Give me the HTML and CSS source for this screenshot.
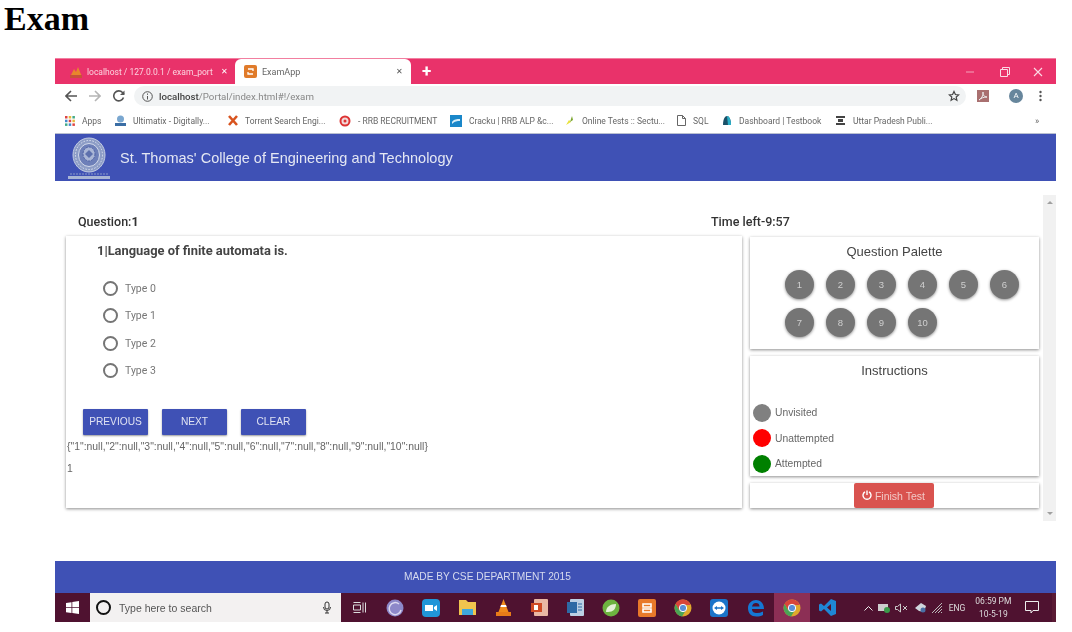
FILE: index.html
```html
<!DOCTYPE html>
<html lang="en">
<head>
    <meta charset="UTF-8">
    <meta name="viewport" content="width=device-width, initial-scale=1.0">
    <title>Exam</title>
    <link rel="stylesheet" href="styles.css">
</head>
<body>
    <h1 class="doc-title">Exam</h1>

    <div class="shot">
        <!-- browser tabs -->
        <div class="tabbar">
            <div class="tab">
                <svg width="14" height="14" viewBox="0 0 14 14"><path d="M1 12 L5 4 L7 7 L9 2 L13 12Z" fill="#e8862c"/><path d="M1 10h12v3H1z" fill="#c9503a"/></svg>
                <span class="tab-name">localhost / 127.0.0.1 / exam_port</span>
                <span class="tab-x">✕</span>
            </div>
            <div class="tab tab-active">
                <svg width="13" height="13" viewBox="0 0 13 13"><rect width="13" height="13" rx="2" fill="#e07b2a"/><path d="M4 4h5v2M9 9H4V7" fill="none" stroke="#fff" stroke-width="1.3"/></svg>
                <span class="tab-name">ExamApp</span>
                <span class="tab-x">✕</span>
            </div>
            <span class="tab-plus">+</span>
            <div class="win-btns">
                <svg width="10" height="10" viewBox="0 0 10 10"><path d="M1 5h8" stroke="#f3a3bb" stroke-width="1"/></svg>
                <svg width="10" height="10" viewBox="0 0 10 10"><path d="M.5 2.5h7v7h-7zM2.5 2.5v-2h7v7h-2" fill="none" stroke="#fbdbe5"/></svg>
                <svg class="win-close" width="10" height="10" viewBox="0 0 10 10"><path d="M1 1l8 8M9 1l-8 8" stroke="#fbdbe5" stroke-width="1.1"/></svg>
            </div>
        </div>

        <!-- address bar -->
        <div class="toolbar">
            <svg class="nav" width="12" height="12" viewBox="0 0 12 12"><path d="M12 6H1.5M6 1L1 6l5 5" fill="none" stroke="#555" stroke-width="1.6"/></svg>
            <svg class="nav" width="12" height="12" viewBox="0 0 12 12"><path d="M0 6h10.5M6 1l5 5-5 5" fill="none" stroke="#b5b5b5" stroke-width="1.6"/></svg>
            <svg class="nav" width="12" height="12" viewBox="0 0 12 12"><path d="M10.5 7.5A5 5 0 1 1 9.5 2.5L11 4" fill="none" stroke="#555" stroke-width="1.6"/><path d="M11.5 .5v4.500h-4.500z" fill="#555"/></svg>
            <div class="omnibox">
                <svg width="11" height="11" viewBox="0 0 11 11"><circle cx="5.500" cy="5.500" r="4.800" fill="none" stroke="#555"/><path d="M5.500 5v3.500M5.500 2.500v1.300" stroke="#555"/></svg>
                <span class="url"><b>localhost</b>/Portal/index.html#!/exam</span>
                <svg class="star" width="12" height="12" viewBox="0 0 24 24"><path d="M12 3l2.800 6 6.500.7-4.900 4.400 1.400 6.400L12 17.200l-5.800 3.300 1.400-6.400-4.900-4.400 6.500-.7z" fill="none" stroke="#444" stroke-width="2.400"/></svg>
            </div>
            <svg class="pdf" width="12" height="12" viewBox="0 0 12 12"><rect width="12" height="12" fill="#a97070"/><path d="M2 10c3-2 5-6 4-8-1 2 1 5 4 5-3 0-6 1-8 3z" fill="none" stroke="#eee"/></svg>
            <span class="avatar">A</span>
            <svg width="3" height="12" viewBox="0 0 3 12"><circle cx="1.500" cy="2" r="1.200" fill="#555"/><circle cx="1.500" cy="6" r="1.200" fill="#555"/><circle cx="1.500" cy="10" r="1.200" fill="#555"/></svg>
        </div>

        <!-- bookmarks -->
        <div class="bookmarks">
            <a class="bm bm-apps"><svg width="10" height="10" viewBox="0 0 10 10"><path d="M0 0h2.500v2.500H0z" fill="#d44"/><path d="M3.700 0h2.500v2.500H3.700z" fill="#e8b93a"/><path d="M7.400 0h2.500v2.500H7.400z" fill="#4a8"/><path d="M0 3.700h2.500v2.500H0z" fill="#48c"/><path d="M3.700 3.700h2.500v2.500H3.700z" fill="#d44"/><path d="M7.400 3.700h2.500v2.500H7.400z" fill="#e8b93a"/><path d="M0 7.400h2.500v2.500H0z" fill="#4a8"/><path d="M3.700 7.400h2.500v2.500H3.700z" fill="#48c"/><path d="M7.400 7.400h2.500v2.500H7.400z" fill="#d44"/></svg>Apps</a>
            <a class="bm bm-ulti"><svg width="11" height="11" viewBox="0 0 11 11"><circle cx="5.500" cy="4" r="3.500" fill="#7aa7d0"/><path d="M0 8h11v3H0z" fill="#3b6ea5"/></svg>Ultimatix - Digitally...</a>
            <a class="bm bm-torrent"><svg width="10" height="11" viewBox="0 0 10 11"><path d="M1 1l8 9M9 1l-8 9" stroke="#d8541f" stroke-width="2.600"/></svg>Torrent Search Engi...</a>
            <a class="bm bm-rrb"><svg width="12" height="12" viewBox="0 0 12 12"><circle cx="6" cy="6" r="4.500" fill="#f2d9d9" stroke="#d33" stroke-width="2"/><circle cx="6" cy="6" r="1.500" fill="#d33"/></svg>- RRB RECRUITMENT</a>
            <a class="bm bm-cracku"><svg width="12" height="12" viewBox="0 0 12 12"><rect width="12" height="12" fill="#1a87c9"/><path d="M2 7c2-3 5-3 8-3v2C7 6 5 6 2 9z" fill="#d7eef9"/></svg>Cracku | RRB ALP &amp;c...</a>
            <a class="bm bm-online"><svg width="10" height="11" viewBox="0 0 10 11"><path d="M1 10l3-5 2 2z" fill="#e8e23a"/><path d="M7 1l1 4-3 2z" fill="#7aa52c"/></svg>Online Tests :: Sectu...</a>
            <a class="bm bm-sql"><svg width="9" height="11" viewBox="0 0 9 11"><path d="M.5.500h5l3 3v7h-8zM5.500.500v3h3" fill="#fff" stroke="#666"/></svg>SQL</a>
            <a class="bm bm-dash"><svg width="10" height="11" viewBox="0 0 10 11"><path d="M1 10C1 4 3 1 5 1s4 3 4 9z" fill="#1a5068"/><path d="M5 1c2 0 4 3 4 9H6z" fill="#2bb0c8"/></svg>Dashboard | Testbook</a>
            <a class="bm bm-up"><svg width="11" height="11" viewBox="0 0 11 11"><path d="M1 1h9v2H1zM3 4h5v3H3zM1 8h9v2H1z" fill="#444"/></svg>Uttar Pradesh Publi...</a>
            <span class="bm-more">»</span>
        </div>

        <!-- page -->
        <header class="app-head">
            <svg class="crest" width="42" height="44" viewBox="0 0 42 44">
                <ellipse cx="21" cy="18" rx="16" ry="17" fill="#8d9dc6" stroke="#c3cce3"/>
                <ellipse cx="21" cy="18" rx="13.500" ry="14.500" fill="none" stroke="#dfe4f1" stroke-dasharray="1.500 1.500"/>
                <ellipse cx="21" cy="18" rx="10.500" ry="11.500" fill="#6d7fb8" stroke="#d4dbeb"/>
                <ellipse cx="21" cy="17" rx="6" ry="7" fill="#aab6d6" stroke="#4f62a6" stroke-dasharray="2 1"/>
                <path d="M17 17l4-4 4 4-4 4z" fill="#5d70ad"/>
                <path d="M0 39h42v3H0z" fill="#a9b5d5"/>
                <path d="M2 37h38" stroke="#8c9bc8" stroke-dasharray="2 1"/>
            </svg>
            <span class="app-name">St. Thomas' College of Engineering and Technology</span>
        </header>

        <div class="app-body">
            <div class="app-main">
                <div class="status-row">
                    <span class="status-q">Question:<b>1</b></span>
                    <span class="status-t">Time left-9:57</span>
                </div>
                <div class="exam-grid">
                    <section class="card q-card">
                        <h3 class="q-text">1|Language of finite automata is.</h3>
                        <div class="opts">
                            <label class="opt"><span class="radio"></span>Type 0</label>
                            <label class="opt"><span class="radio"></span>Type 1</label>
                            <label class="opt"><span class="radio"></span>Type 2</label>
                            <label class="opt"><span class="radio"></span>Type 3</label>
                        </div>
                        <div class="q-btns">
                            <button class="q-btn">PREVIOUS</button>
                            <button class="q-btn">NEXT</button>
                            <button class="q-btn">CLEAR</button>
                        </div>
                        <p class="debug">{"1":null,"2":null,"3":null,"4":null,"5":null,"6":null,"7":null,"8":null,"9":null,"10":null}</p>
                        <p class="debug debug-num">1</p>
                    </section>
                    <aside class="side">
                        <section class="card palette">
                            <h4 class="side-title">Question Palette</h4>
                            <div class="pal-grid">
                                <button class="pal-btn">1</button>
                                <button class="pal-btn">2</button>
                                <button class="pal-btn">3</button>
                                <button class="pal-btn">4</button>
                                <button class="pal-btn">5</button>
                                <button class="pal-btn">6</button>
                                <button class="pal-btn">7</button>
                                <button class="pal-btn">8</button>
                                <button class="pal-btn">9</button>
                                <button class="pal-btn">10</button>
                            </div>
                        </section>
                        <section class="card instr">
                            <h4 class="side-title">Instructions</h4>
                            <ul class="legend">
                                <li><span class="dot dot-grey"></span>Unvisited</li>
                                <li><span class="dot dot-red"></span>Unattempted</li>
                                <li><span class="dot dot-green"></span>Attempted</li>
                            </ul>
                        </section>
                        <section class="card finish">
                            <button class="finish-btn">
                                <svg width="10" height="10" viewBox="0 0 10 10"><path d="M3 1.800a4 4 0 1 0 4 0M5 .5v4.500" fill="none" stroke="#fff" stroke-width="1.400"/></svg>
                                Finish Test
                            </button>
                        </section>
                    </aside>
                </div>
            </div>
            <div class="scroll">
                <span class="arrow-up"></span>
                <span class="arrow-down"></span>
            </div>
        </div>

        <footer class="app-foot">MADE BY CSE DEPARTMENT 2015</footer>

        <!-- windows taskbar -->
        <div class="taskbar">
            <div class="start">
                <svg width="13" height="13" viewBox="0 0 13 13"><path d="M0 2l5.500-.8v5H0zM6.300 1l6.700-1v6.200H6.300zM0 7h5.500v5L0 11.200zM6.300 7H13v6l-6.700-1z" fill="#fff"/></svg>
            </div>
            <div class="search">
                <span class="cortana"></span>
                <span class="search-text">Type here to search</span>
                <svg width="8" height="13" viewBox="0 0 8 13"><rect x="2" y="1" width="4" height="7" rx="2" fill="none" stroke="#333"/><path d="M.5 6a3.500 3.500 0 0 0 7 0M4 10v2M2 12h4" fill="none" stroke="#333"/></svg>
            </div>
            <span class="task"><svg width="13" height="11" viewBox="0 0 13 11"><path d="M.5 3h7v5h-7zM.5 .5h7M.5 10.500h7M10 .5v10M12.500 .5v10" fill="none" stroke="#ddd"/></svg></span>
            <span class="task"><svg width="18" height="18" viewBox="0 0 18 18"><circle cx="9" cy="9" r="8.500" fill="#8d88c9"/><path d="M13 5a6 6 0 1 0 2 6" fill="none" stroke="#dcd9f0" stroke-width="1.500"/></svg></span>
            <span class="task"><svg width="18" height="18" viewBox="0 0 18 18"><rect width="18" height="18" rx="4" fill="#2196d8"/><path d="M3 6h8v6H3zM12 8l3-2v6l-3-2z" fill="#fff"/></svg></span>
            <span class="task"><svg width="17" height="15" viewBox="0 0 17 15"><path d="M0 0h7l2 2h8v13H0z" fill="#f0c44e"/><path d="M3 9h11v6H3z" fill="#3fa8dc"/></svg></span>
            <span class="task"><svg width="15" height="17" viewBox="0 0 15 17"><path d="M7.500 0l5 13h-10z" fill="#f08a1c"/><path d="M5 6h5l.7 2H4.300z" fill="#fff"/><path d="M0 13h15v4H0z" fill="#e87b18"/></svg></span>
            <span class="task"><svg width="17" height="17" viewBox="0 0 17 17"><rect x="3" width="14" height="17" rx="1" fill="#e9b7a4"/><rect y="4" width="11" height="9" fill="#cf4a25"/><path d="M3 6h4v5H3z" fill="#fff"/></svg></span>
            <span class="task"><svg width="17" height="17" viewBox="0 0 17 17"><rect x="3" width="14" height="17" rx="1" fill="#bcd0e4"/><rect y="3" width="10" height="11" fill="#2d6aa5"/><path d="M11 5h4M11 8h4M11 11h4" stroke="#2d6aa5"/></svg></span>
            <span class="task"><svg width="18" height="18" viewBox="0 0 18 18"><circle cx="9" cy="9" r="8.500" fill="#6db33f"/><path d="M4 13C4 8 8 5 14 5c0 5-3 8-8 8" fill="#e5f2d8"/></svg></span>
            <span class="task"><svg width="18" height="18" viewBox="0 0 18 18"><rect width="18" height="18" rx="2" fill="#e8792a"/><path d="M5 5h8v3H5zM5 10h8v3H5z" fill="none" stroke="#fff" stroke-width="1.600"/></svg></span>
            <span class="task"><svg class="chrome" width="18" height="18" viewBox="0 0 18 18"><circle cx="9" cy="9" r="8.500" fill="#e0a92c"/><path d="M9 .5A8.500 8.500 0 0 0 1.600 5L5 11l4-5h7.600A8.500 8.500 0 0 0 9 .5z" fill="#d8463a"/><path d="M1.600 5A8.500 8.500 0 0 0 8 17.400L12 11H5z" fill="#4aa556"/><circle cx="9" cy="9" r="3.700" fill="#5a8fd8" stroke="#fff"/></svg></span>
            <span class="task"><svg width="18" height="18" viewBox="0 0 18 18"><rect width="18" height="18" rx="3" fill="#1b74c9"/><circle cx="9" cy="9" r="6.500" fill="#fff"/><path d="M4 9l3-2v1.300h4V7l3 2-3 2V9.700H7V11z" fill="#1b74c9"/></svg></span>
            <span class="task"><svg width="18" height="18" viewBox="0 0 18 18"><path d="M1 9C1 4 5 1 9 1s8 3 8 9H5c0 3 2 4 5 4 2 0 4-.5 6-1.500v3.500C14 17 12 17.500 9.500 17.500 4 17.500 1 14 1 9zm4-1.500h7.500C12.500 5 11 4 9 4S5.500 5 5 7.500z" fill="#1578d4"/></svg></span>
            <span class="task task-active"><svg class="chrome" width="18" height="18" viewBox="0 0 18 18"><circle cx="9" cy="9" r="8.500" fill="#e0a92c"/><path d="M9 .5A8.500 8.500 0 0 0 1.600 5L5 11l4-5h7.600A8.500 8.500 0 0 0 9 .5z" fill="#d8463a"/><path d="M1.600 5A8.500 8.500 0 0 0 8 17.400L12 11H5z" fill="#4aa556"/><circle cx="9" cy="9" r="3.700" fill="#5a8fd8" stroke="#fff"/></svg></span>
            <span class="task"><svg width="17" height="17" viewBox="0 0 17 17"><path d="M12 0l5 2v13l-5 2L5 10l-3 2.500L0 11.500V5.500L2 4.500 5 7zM12 5L8 8.500 12 12z" fill="#1f87d6"/></svg></span>
            <div class="tray">
                <svg width="9" height="6" viewBox="0 0 9 6"><path d="M.5 5.500l4-4 4 4" fill="none" stroke="#eee"/></svg>
                <svg width="12" height="10" viewBox="0 0 12 10"><rect y="1" width="10" height="7" fill="#ccc"/><circle cx="9" cy="7" r="3" fill="#3a9a4a"/></svg>
                <svg width="14" height="10" viewBox="0 0 14 10"><path d="M.5 3.500h2l3-2.500v8l-3-2.500h-2zM8 3l4 4M12 3L8 7" fill="none" stroke="#ccc"/></svg>
                <svg width="13" height="11" viewBox="0 0 13 11"><path d="M1 6l6-5 5 3-2 6-5-1z" fill="#cfd5dc"/><circle cx="9" cy="8" r="2.500" fill="#4a6ea5"/></svg>
                <svg width="12" height="10" viewBox="0 0 12 10"><path d="M0 10L10 0M3 10L10 3M6 10l4-4M9 10l1-1" stroke="#bbb"/></svg>
                <span class="tray-lang">ENG</span>
                <span class="clock"><span>06:59 PM</span><span>10-5-19</span></span>
                <svg class="notif" width="14" height="13" viewBox="0 0 14 13"><path d="M.5.5h13v9H8l-2 2.500v-2.500H.5z" fill="none" stroke="#eee"/></svg>
            </div>
        </div>
    </div>
</body>
</html>
```

FILE: styles.css
```css
body {
    margin: 0;
    background-color: #fff;
    font-family: Roboto, "Liberation Sans", sans-serif;
    overflow: hidden;
}

.doc-title {
    margin: 0;
    height: 58px;
    padding: 0 0 0 4px;
    font-family: "Liberation Serif", serif;
    font-size: 34px;
    line-height: 37px;
    font-weight: bold;
    color: #000;
}

.shot {
    width: 1001px;
    margin-left: 55px;
    filter: blur(0.45px);
}

/* browser chrome */
.tabbar {
    height: 26px;
    background-color: #e9326a;
    display: flex;
    align-items: center;
    border-top: 1px solid #f27fa0;
    box-sizing: border-box;
    color: #fff;
}

.tab {
    width: 180px;
    height: 25px;
    display: flex;
    align-items: center;
    gap: 4px;
    padding: 0 7px 0 14px;
    box-sizing: border-box;
    font-size: 8.5px;
}

.tab-name {
    flex: 1;
    white-space: nowrap;
    overflow: hidden;
    color: #fbd3df;
}

.tab-x {
    font-size: 8px;
}

.tab-active {
    width: 176px;
    background-color: #fff;
    border-radius: 6px 6px 0 0;
    gap: 5px;
    padding: 0 8px 0 9px;
}

.tab-active .tab-name {
    color: #666;
    font-size: 9px;
}

.tab-active .tab-x {
    color: #555;
}

.tab-plus {
    margin-left: 11px;
    font-size: 17px;
    line-height: 1;
    font-weight: bold;
}

.win-btns {
    margin-left: auto;
    display: flex;
    gap: 25px;
    padding-right: 13px;
}

.win-close {
    margin-left: -2px;
}

.toolbar {
    height: 24px;
    display: flex;
    align-items: center;
    background-color: #fff;
    padding-left: 10px;
    gap: 12px;
}

.omnibox {
    width: 832px;
    height: 20px;
    margin-left: -3px;
    background-color: #f1f3f4;
    border-radius: 10px;
    display: flex;
    align-items: center;
    gap: 6px;
    padding: 0 6px 0 8px;
    box-sizing: border-box;
    font-size: 9.7px;
    color: #888;
}

.url b {
    font-weight: 500;
    color: #444;
}

.star {
    margin-left: auto;
}

.pdf {
    margin-left: -1px;
}

.avatar {
    width: 14px;
    height: 14px;
    margin-left: 8px;
    margin-right: 4px;
    border-radius: 50%;
    background-color: #67869c;
    color: #fff;
    font-size: 8px;
    line-height: 14px;
    text-align: center;
}

.bookmarks {
    height: 26px;
    display: flex;
    align-items: center;
    padding-left: 10px;
    background-color: #fff;
    border-bottom: 1px solid #b9bfd0;
    box-sizing: border-box;
    font-size: 8.5px;
    color: #666;
}

.bm {
    display: flex;
    align-items: center;
    gap: 7px;
    white-space: nowrap;
}

.bm-apps { width: 50px; }
.bm-ulti { width: 113px; }
.bm-torrent { width: 111px; }
.bm-rrb { width: 111px; }
.bm-cracku { width: 115px; }
.bm-online { width: 112px; }
.bm-sql { width: 45px; }
.bm-dash { width: 113px; }
.bm-up { width: 200px; }

.bm-more {
    font-size: 9px;
}

/* exam page */
.app-head {
    height: 47px;
    background-color: #3f51b5;
    display: flex;
    align-items: center;
    padding-left: 13px;
    gap: 10px;
}

.crest {
    margin-top: 2px;
}

.app-name {
    color: #e4e7f3;
    font-family: "Liberation Sans", sans-serif;
    font-size: 14.5px;
}

.app-body {
    height: 380px;
    display: flex;
    background-color: #fff;
}

.app-main {
    width: 988px;
    padding: 0 4px 0 11px;
    box-sizing: border-box;
}

.status-row {
    height: 55px;
    display: flex;
    align-items: flex-end;
    padding: 0 0 7px 12px;
    box-sizing: border-box;
    font-size: 12.5px;
    font-weight: 500;
    color: #333;
}

.status-q {
    width: 633px;
}

.status-q b {
    font-weight: 700;
}

.exam-grid {
    display: flex;
    gap: 8px;
}

.card {
    background-color: #fff;
    box-shadow: 0 1px 3px rgba(0, 0, 0, 0.45);
}

.q-card {
    width: 676px;
    height: 272px;
    flex-shrink: 0;
}

.q-text {
    margin: 0;
    padding: 7px 0 0 31px;
    font-size: 12.9px;
    line-height: 15px;
    font-weight: 700;
    color: #444;
}

.opts {
    margin-top: 23px;
    padding-left: 37px;
    display: flex;
    flex-direction: column;
    gap: 12.3px;
}

.opt {
    height: 15px;
    display: flex;
    align-items: center;
    gap: 7px;
    font-size: 10.5px;
    color: #777;
}

.radio {
    width: 11px;
    height: 11px;
    border: 2px solid #757575;
    border-radius: 50%;
}

.q-btns {
    margin-top: 31px;
    padding-left: 17px;
    display: flex;
    gap: 14px;
}

.q-btn {
    width: 65px;
    height: 26px;
    border: none;
    border-radius: 1px;
    background-color: #3f51b5;
    color: #dfe2f2;
    font-family: "Liberation Sans", sans-serif;
    font-size: 10.2px;
    padding: 0;
    box-shadow: 0 1px 2px rgba(0, 0, 0, 0.4);
}

.debug {
    margin: 6px 0 0 1px;
    font-family: "Liberation Sans", sans-serif;
    font-size: 10.4px;
    line-height: 12px;
    color: #666;
}

.debug-num {
    margin-top: 10px;
}

.side {
    width: 289px;
    margin-top: 1px;
    display: flex;
    flex-direction: column;
    gap: 7px;
}

.side-title {
    margin: 0;
    text-align: center;
    font-family: "Liberation Sans", sans-serif;
    font-size: 13px;
    line-height: 15px;
    font-weight: normal;
    color: #444;
}

.palette {
    height: 112px;
    padding-top: 7px;
    box-sizing: border-box;
}

.pal-grid {
    width: 240px;
    margin: 11px 0 0 35px;
    display: flex;
    flex-wrap: wrap;
    gap: 9px 12px;
}

.pal-btn {
    width: 29px;
    height: 29px;
    padding: 0;
    border: none;
    border-radius: 50%;
    background-color: #757575;
    color: #cfcfcf;
    font-size: 9.5px;
    box-shadow: 0 1px 3px rgba(0, 0, 0, 0.45);
}

.instr {
    height: 120px;
    padding-top: 7px;
    box-sizing: border-box;
}

.legend {
    list-style-type: none;
    margin: 22px 0 0;
    padding: 0 0 0 3px;
}

.legend li {
    height: 25.500px;
    display: flex;
    align-items: center;
    gap: 4px;
    font-family: "Liberation Sans", sans-serif;
    font-size: 10.3px;
    color: #666;
}

.dot {
    width: 18px;
    height: 18px;
    border-radius: 50%;
}

.dot-grey { background-color: #808080; }
.dot-red { background-color: #ff0000; }
.dot-green { background-color: #008000; }

.finish {
    height: 25px;
    display: flex;
    justify-content: center;
    padding-right: 2px;
    box-sizing: border-box;
}

.finish-btn {
    width: 80px;
    height: 25px;
    padding: 0;
    border: none;
    border-radius: 2px;
    background-color: #d9534f;
    color: #f2c9c7;
    font-family: "Liberation Sans", sans-serif;
    font-size: 10.5px;
}

.scroll {
    width: 13px;
    height: 326px;
    margin-top: 14px;
    background-color: #f1f1f1;
    display: flex;
    flex-direction: column;
    justify-content: space-between;
    align-items: center;
    padding: 6px 0;
    box-sizing: border-box;
}

.arrow-up {
    border: 3px solid transparent;
    border-top: none;
    border-bottom: 3px solid #a0a0a0;
}

.arrow-down {
    border: 3px solid transparent;
    border-bottom: none;
    border-top: 3px solid #a0a0a0;
}

.app-foot {
    height: 32px;
    background-color: #3f51b5;
    color: #d6daee;
    font-family: "Liberation Sans", sans-serif;
    font-size: 10.2px;
    line-height: 31px;
    padding-left: 349px;
}

/* windows taskbar */
.taskbar {
    height: 29px;
    display: flex;
    align-items: stretch;
    background-color: #4f1230;
}

.start {
    width: 35px;
    display: flex;
    align-items: center;
    justify-content: center;
}

.search {
    width: 251px;
    display: flex;
    align-items: center;
    padding: 0 10px 0 6px;
    box-sizing: border-box;
    background-color: #f3f1f1;
    gap: 8px;
}

.cortana {
    width: 11px;
    height: 11px;
    border: 2.500px solid #111;
    border-radius: 50%;
}

.search-text {
    flex: 1;
    font-family: "Liberation Sans", sans-serif;
    font-size: 10.5px;
    color: #555;
}

.task {
    width: 36.050px;
    display: flex;
    align-items: center;
    justify-content: center;
}

.task-active {
    background-color: #8c2f55;
}

.tray {
    flex: 1;
    display: flex;
    align-items: center;
    gap: 5px;
    padding-left: 18px;
    color: #ddd;
    box-shadow: inset -4px 0 0 #5a1a34;
}

.tray-lang {
    font-size: 8.5px;
}

.clock {
    display: flex;
    flex-direction: column;
    align-items: center;
    font-size: 8.5px;
    line-height: 13px;
    margin-left: 5px;
}

.notif {
    margin-left: 9px;
}
```
